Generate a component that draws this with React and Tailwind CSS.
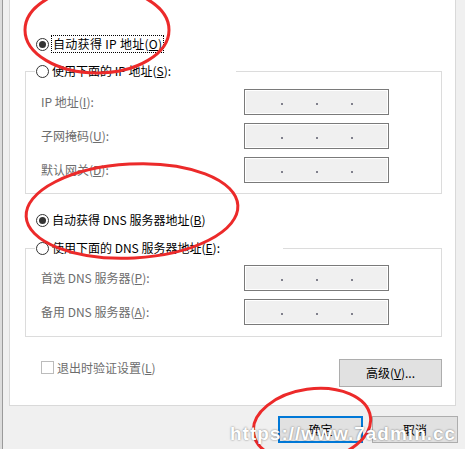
import React from 'react';

function Radio({ checked }) {
  return (
    <span className="flex h-[13px] w-[13px] shrink-0 items-center justify-center rounded-full border border-[#333333] bg-white">
      {checked && <span className="h-[7px] w-[7px] rounded-full bg-[#333333]" />}
    </span>
  );
}

function IpBox() {
  return (
    <div className="h-[26px] w-[145px] border border-[#7a7a7a] bg-white p-[1px]">
      <div className="flex h-full items-center justify-center gap-[33px] bg-[#f0f0f0] pt-[4px]">
        <span className="h-[2px] w-[2px] bg-[#80808c]" />
        <span className="h-[2px] w-[2px] bg-[#80808c]" />
        <span className="h-[2px] w-[2px] bg-[#80808c]" />
      </div>
    </div>
  );
}

function FieldRow({ label }) {
  return (
    <div className="flex h-[26px] items-center">
      <span className="w-[203px] text-[#6d6d6d]">{label}</span>
      <IpBox />
    </div>
  );
}

function Group({ legend, legendWidth, rows, className }) {
  return (
    <fieldset className={`w-[417px] border border-[#dcdcdc] ${className}`}>
      <legend className={`ml-[9px] bg-white px-[1px] ${legendWidth}`}>
        <div className="flex h-[20px] items-center">
          <Radio />
          <span className="ml-[3px]">{legend}</span>
        </div>
      </legend>
      {rows}
    </fieldset>
  );
}

export default function App() {
  return (
    <div className="relative flex h-[449px] w-[465px] overflow-hidden bg-[#f0f0f0] font-['Noto_Sans_CJK_SC','Noto_Sans',sans-serif] text-[12px] leading-[20px] text-black">
      {/* window edge behind the dialog */}
      <div className="w-[2px] bg-[#dcdcdc]" />
      <div className="w-[1px] bg-[#9a9a9a]" />

      <div className="ml-[6px] flex flex-col">
        {/* white property page */}
        <div className="flex h-[406px] w-[447px] flex-col border border-t-0 border-[#d9d9d9] bg-white pl-[15px] pt-[34px]">
          <div className="flex h-[20px] items-center pl-[11px]">
            <Radio checked />
            <span className="ml-[2px] flex h-[18px] items-center border border-dotted border-black px-[1px] tracking-[0.3px]">
              自动获得 IP 地址(<u>O</u>)
            </span>
          </div>

          <Group
            className="mt-[7px]"
            legendWidth="w-[201px]"
            legend={<>使用下面的 IP 地址(<u>S</u>):</>}
            rows={
              <div className="flex flex-col gap-[8px] pb-[10px] pl-[15px] pt-[8px]">
                <FieldRow label={<>IP 地址(<u>I</u>):</>} />
                <FieldRow label={<>子网掩码(<u>U</u>):</>} />
                <FieldRow label={<>默认网关(<u>D</u>):</>} />
              </div>
            }
          />

          <div className="mt-[16px] flex h-[20px] items-center pl-[11px]">
            <Radio checked />
            <span className="ml-[3px]">
              自动获得 DNS 服务器地址(<u>B</u>)
            </span>
          </div>

          <Group
            className="mt-[8px]"
            legendWidth="w-[248px]"
            legend={<>使用下面的 DNS 服务器地址(<u>E</u>):</>}
            rows={
              <div className="flex flex-col gap-[8px] pb-[11px] pl-[15px] pt-[7px]">
                <FieldRow label={<>首选 DNS 服务器(<u>P</u>):</>} />
                <FieldRow label={<>备用 DNS 服务器(<u>A</u>):</>} />
              </div>
            }
          />

          <div className="mt-[22px] flex w-[417px] items-start justify-between">
            <div className="ml-[16px] mt-[2px] flex h-[13px] items-center">
              <span className="h-[13px] w-[13px] border border-[#bcbcbc] bg-white" />
              <span className="ml-[3px] text-[#6d6d6d]">
                退出时验证设置(<u>L</u>)
              </span>
            </div>
            <button className="flex h-[28px] w-[103px] items-center justify-center border border-[#adadad] bg-[#e1e1e1]">
              高级(<u>V</u>)...
            </button>
          </div>
        </div>

        {/* dialog buttons */}
        <div className="mt-[10px] flex w-[449px] justify-end gap-[9px]">
          <button className="flex h-[27px] w-[85px] items-center justify-center border-2 border-[#0078d7] bg-[#e1e1e1]">
            确定
          </button>
          <button className="flex h-[27px] w-[86px] items-center justify-center border border-[#adadad] bg-[#e1e1e1]">
            取消
          </button>
        </div>
      </div>

      {/* red hand-drawn annotations */}
      <svg className="pointer-events-none absolute left-0 top-0" width="465" height="449" viewBox="0 0 465 449">
        <g fill="none" stroke="#ec2a2a" strokeWidth="3">
          <ellipse cx="97" cy="30" rx="72" ry="43" />
          <ellipse cx="132" cy="211" rx="106" ry="47" transform="rotate(-3 132 211)" />
          <ellipse cx="312" cy="425" rx="59" ry="36" transform="rotate(-8 312 425)" />
        </g>
      </svg>

      {/* watermark */}
      <div className="pointer-events-none absolute left-[230px] top-[424px] font-['Liberation_Sans',sans-serif] text-[19px] font-bold leading-[20px] tracking-[1px] text-white [text-shadow:0_0_2px_rgba(0,0,0,0.55)]">
        https://www.7admin.cc
      </div>
    </div>
  );
}
